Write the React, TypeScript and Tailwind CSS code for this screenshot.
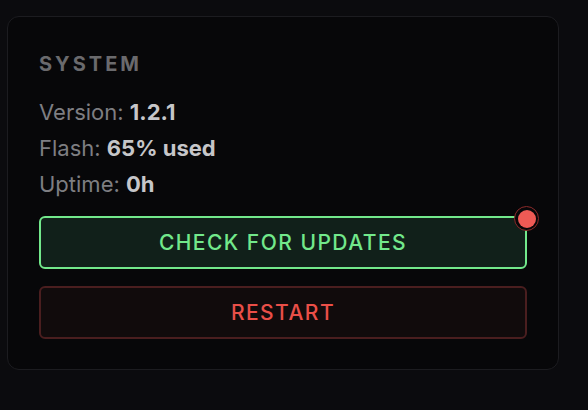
import React from "react";

export default function App() {
  return (
    <div className="w-[588px] h-[410px] bg-[#0b0b0e] pt-[16px] pl-[7px]" style={{ fontFamily: "Inter, 'Noto Sans', sans-serif" }}>
      <div className="w-[552px] h-[354px] rounded-[12px] border border-[#1c1c20] bg-[#070709] px-[31px] pt-[33px] pb-[30px] flex flex-col">
        <div className="text-[20px] leading-[28px] font-bold tracking-[0.15em] text-[#6a6a6d]">SYSTEM</div>
        <div className="mt-[16px] flex flex-col text-[22px] leading-[36px] text-[#7e7e82]">
          <div>Version: <span className="font-bold text-[#c6c6c9]">1.2.1</span></div>
          <div>Flash: <span className="font-bold text-[#c6c6c9]">65% used</span></div>
          <div>Uptime: <span className="font-bold text-[#c6c6c9]">0h</span></div>
        </div>
        <div className="mt-[14px] flex flex-col gap-[17px]">
          <div className="relative">
            <button className="w-full h-[53px] rounded-[6px] border-2 border-[#72e88b] bg-[#11201a] text-[#72e88b] text-[21px] font-medium tracking-[0.07em]">
              CHECK FOR UPDATES
            </button>
            <span className="absolute right-[-12px] top-[-10px] w-[25px] h-[25px] rounded-full border border-[#8a2a2a] bg-[#070709] flex items-center justify-center">
              <span className="w-[18px] h-[18px] rounded-full bg-[#ee5a55]" />
            </span>
          </div>
          <button className="w-full h-[53px] rounded-[6px] border-2 border-[#4a1e1f] bg-[#110b0c] text-[#ea4f48] text-[21px] font-medium tracking-[0.07em]">
            RESTART
          </button>
        </div>
      </div>
    </div>
  );
}
